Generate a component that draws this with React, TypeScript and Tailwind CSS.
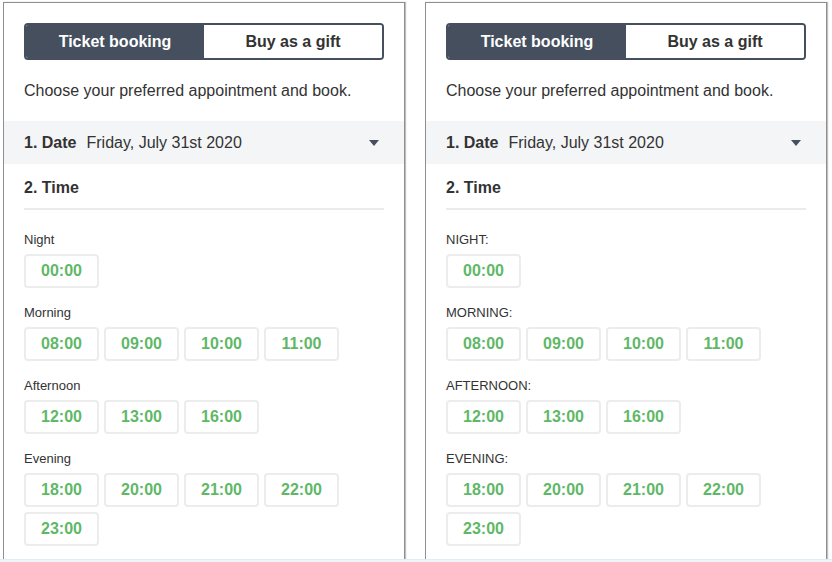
import React from "react";

interface Slot {
  label: string;
  times: string[];
}

const slots: Slot[] = [
  { label: "Night", times: ["00:00"] },
  { label: "Morning", times: ["08:00", "09:00", "10:00", "11:00"] },
  { label: "Afternoon", times: ["12:00", "13:00", "16:00"] },
  { label: "Evening", times: ["18:00", "20:00", "21:00", "22:00", "23:00"] },
];

function Panel({ upper }: { upper: boolean }) {
  return (
    <div className="w-[402px] h-full border border-b-0 border-[#8f8f8f] shadow-[1px_0_1px_rgba(0,0,0,0.25)] bg-white pt-[20px]">
      <div className="px-[20px]">
        <div className="flex h-[37px] rounded-[4px] border-2 border-[#454f5e] overflow-hidden">
          <button className="w-1/2 bg-[#454f5e] text-white font-bold text-[16px]">
            Ticket booking
          </button>
          <button className="w-1/2 bg-white text-[#333] font-bold text-[16px]">
            Buy as a gift
          </button>
        </div>
        <p className="mt-[22px] text-[16px] leading-[18px] text-[#333]">
          Choose your preferred appointment and book.
        </p>
      </div>

      <div className="mt-[21px] h-[43px] bg-[#f4f5f7] flex items-center pl-[20px] pr-[25px] text-[16px] text-[#333]">
        <span className="font-bold">1. Date</span>
        <span className="ml-[10px]">Friday, July 31st 2020</span>
        <svg className="ml-auto" width="10" height="6" viewBox="0 0 10 6">
          <path d="M0 0 H10 L5 6 Z" fill="#454f5e" />
        </svg>
      </div>

      <div className="px-[20px]">
        <div className="mt-[15px] pb-[11px] border-b-2 border-[#ebebeb] text-[16px] leading-[18px] font-bold text-[#333]">
          2. Time
        </div>
        <div className="pt-[22px]">
          {slots.map((s, i) => (
            <div key={s.label} className={i > 0 ? "mt-[17px]" : ""}>
              <div className="text-[13px] leading-[16px] text-[#333] mb-[6px]">
                {upper ? s.label.toUpperCase() + ":" : s.label}
              </div>
              <div className="flex flex-wrap gap-x-[5px] gap-y-[5px]">
                {s.times.map((t) => (
                  <button
                    key={t}
                    className="w-[75px] h-[34px] rounded-[4px] border-2 border-[#ececec] bg-white text-[#5fb868] font-bold text-[16px]"
                  >
                    {t}
                  </button>
                ))}
              </div>
            </div>
          ))}
        </div>
      </div>
    </div>
  );
}

export default function App() {
  return (
    <div
      className="w-[832px] h-[562px] bg-white flex flex-col overflow-hidden"
      style={{ fontFamily: '"Liberation Sans", Arial, sans-serif' }}
    >
      <div className="flex-1 flex gap-[20px] pl-[3px] pt-[2px] overflow-hidden">
        <Panel upper={false} />
        <Panel upper={true} />
      </div>
      <div className="h-[3px] bg-[#eef4fa] border-t border-[#e3ebf3]" />
    </div>
  );
}
